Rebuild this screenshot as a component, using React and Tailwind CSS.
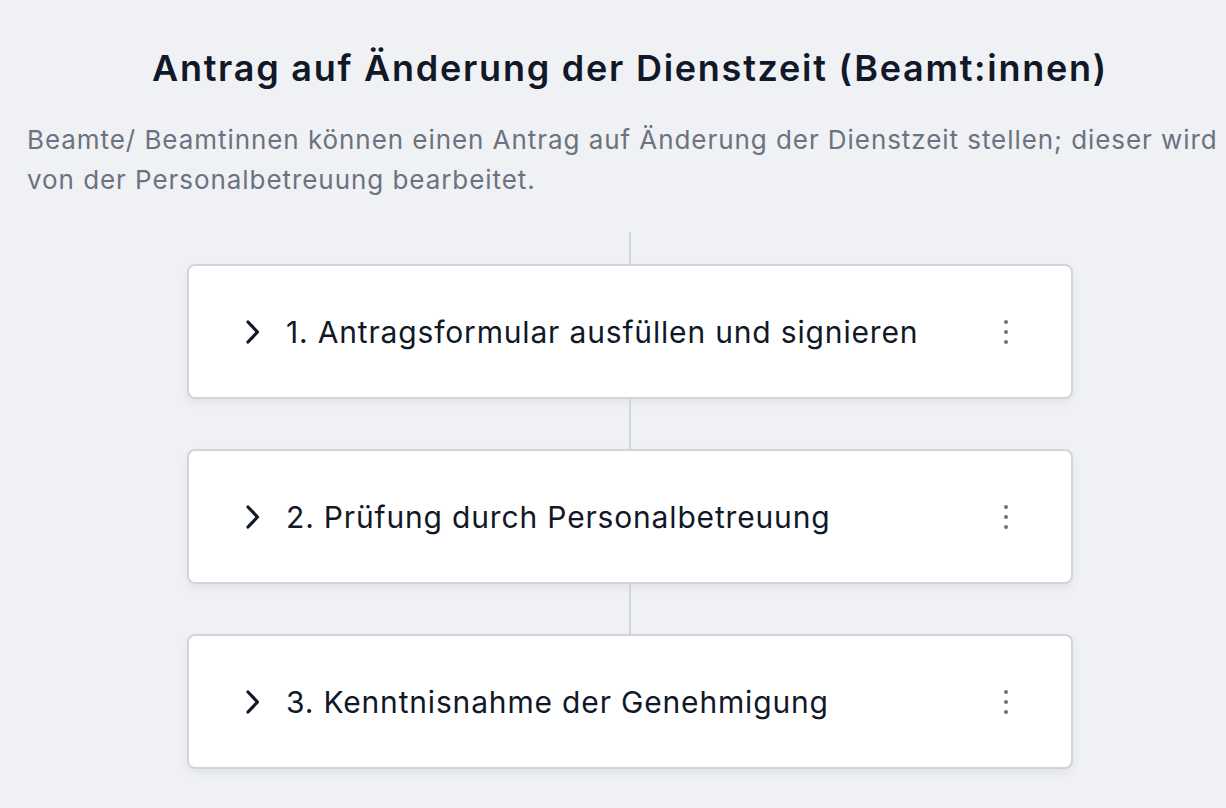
const STEPS = [
  "1. Antragsformular ausfüllen und signieren",
  "2. Prüfung durch Personalbetreuung",
  "3. Kenntnisnahme der Genehmigung",
];

function Chevron() {
  return (
    <svg width="16" height="24" viewBox="0 0 16 24" fill="none" className="shrink-0">
      <path d="M3 2 L12.5 12 L3 22" stroke="#111827" strokeWidth="3.2" strokeLinecap="round" strokeLinejoin="round" />
    </svg>
  );
}

function Dots() {
  return (
    <div className="flex flex-col items-center gap-[6px]">
      <span className="h-[4px] w-[4px] rounded-full bg-[#6b7280]" />
      <span className="h-[4px] w-[4px] rounded-full bg-[#6b7280]" />
      <span className="h-[4px] w-[4px] rounded-full bg-[#6b7280]" />
    </div>
  );
}

function StepCard({ title }) {
  return (
    <div className="flex h-[135px] w-[886px] items-center rounded-[8px] border-2 border-[#d1d5db] bg-white pl-[56px] pr-[63px] shadow-[0_4px_8px_rgba(0,0,0,0.06)]">
      <Chevron />
      <span className="ml-[25px] flex-1 text-[30px] leading-[40px] tracking-[0.83px] text-[#111827]">{title}</span>
      <Dots />
    </div>
  );
}

export default function App() {
  return (
    <div className="min-h-screen w-full overflow-hidden bg-[#f0f1f5] font-['Inter',sans-serif]">
      <div className="ml-[27px] w-[1206px] pt-[48px]">
        <h1 className="text-center text-[36px] font-semibold leading-[40px] tracking-[1.75px] text-[#111827]">
          Antrag auf Änderung der Dienstzeit (Beamt:innen)
        </h1>
        <p className="mt-[32px] whitespace-nowrap text-[26px] leading-[40px] tracking-[0.94px] text-[#6b7280]">
          Beamte/ Beamtinnen können einen Antrag auf Änderung der Dienstzeit stellen; dieser wird
          <br />
          von der Personalbetreuung bearbeitet.
        </p>
        <div className="mt-[32px] flex flex-col items-center">
          {STEPS.map((s, i) => (
            <div key={s} className="flex flex-col items-center">
              <div className={`w-[2px] bg-[#d1d5db] ${i === 0 ? "h-[32px]" : "h-[50px]"}`} />
              <StepCard title={s} />
            </div>
          ))}
        </div>
      </div>
    </div>
  );
}
